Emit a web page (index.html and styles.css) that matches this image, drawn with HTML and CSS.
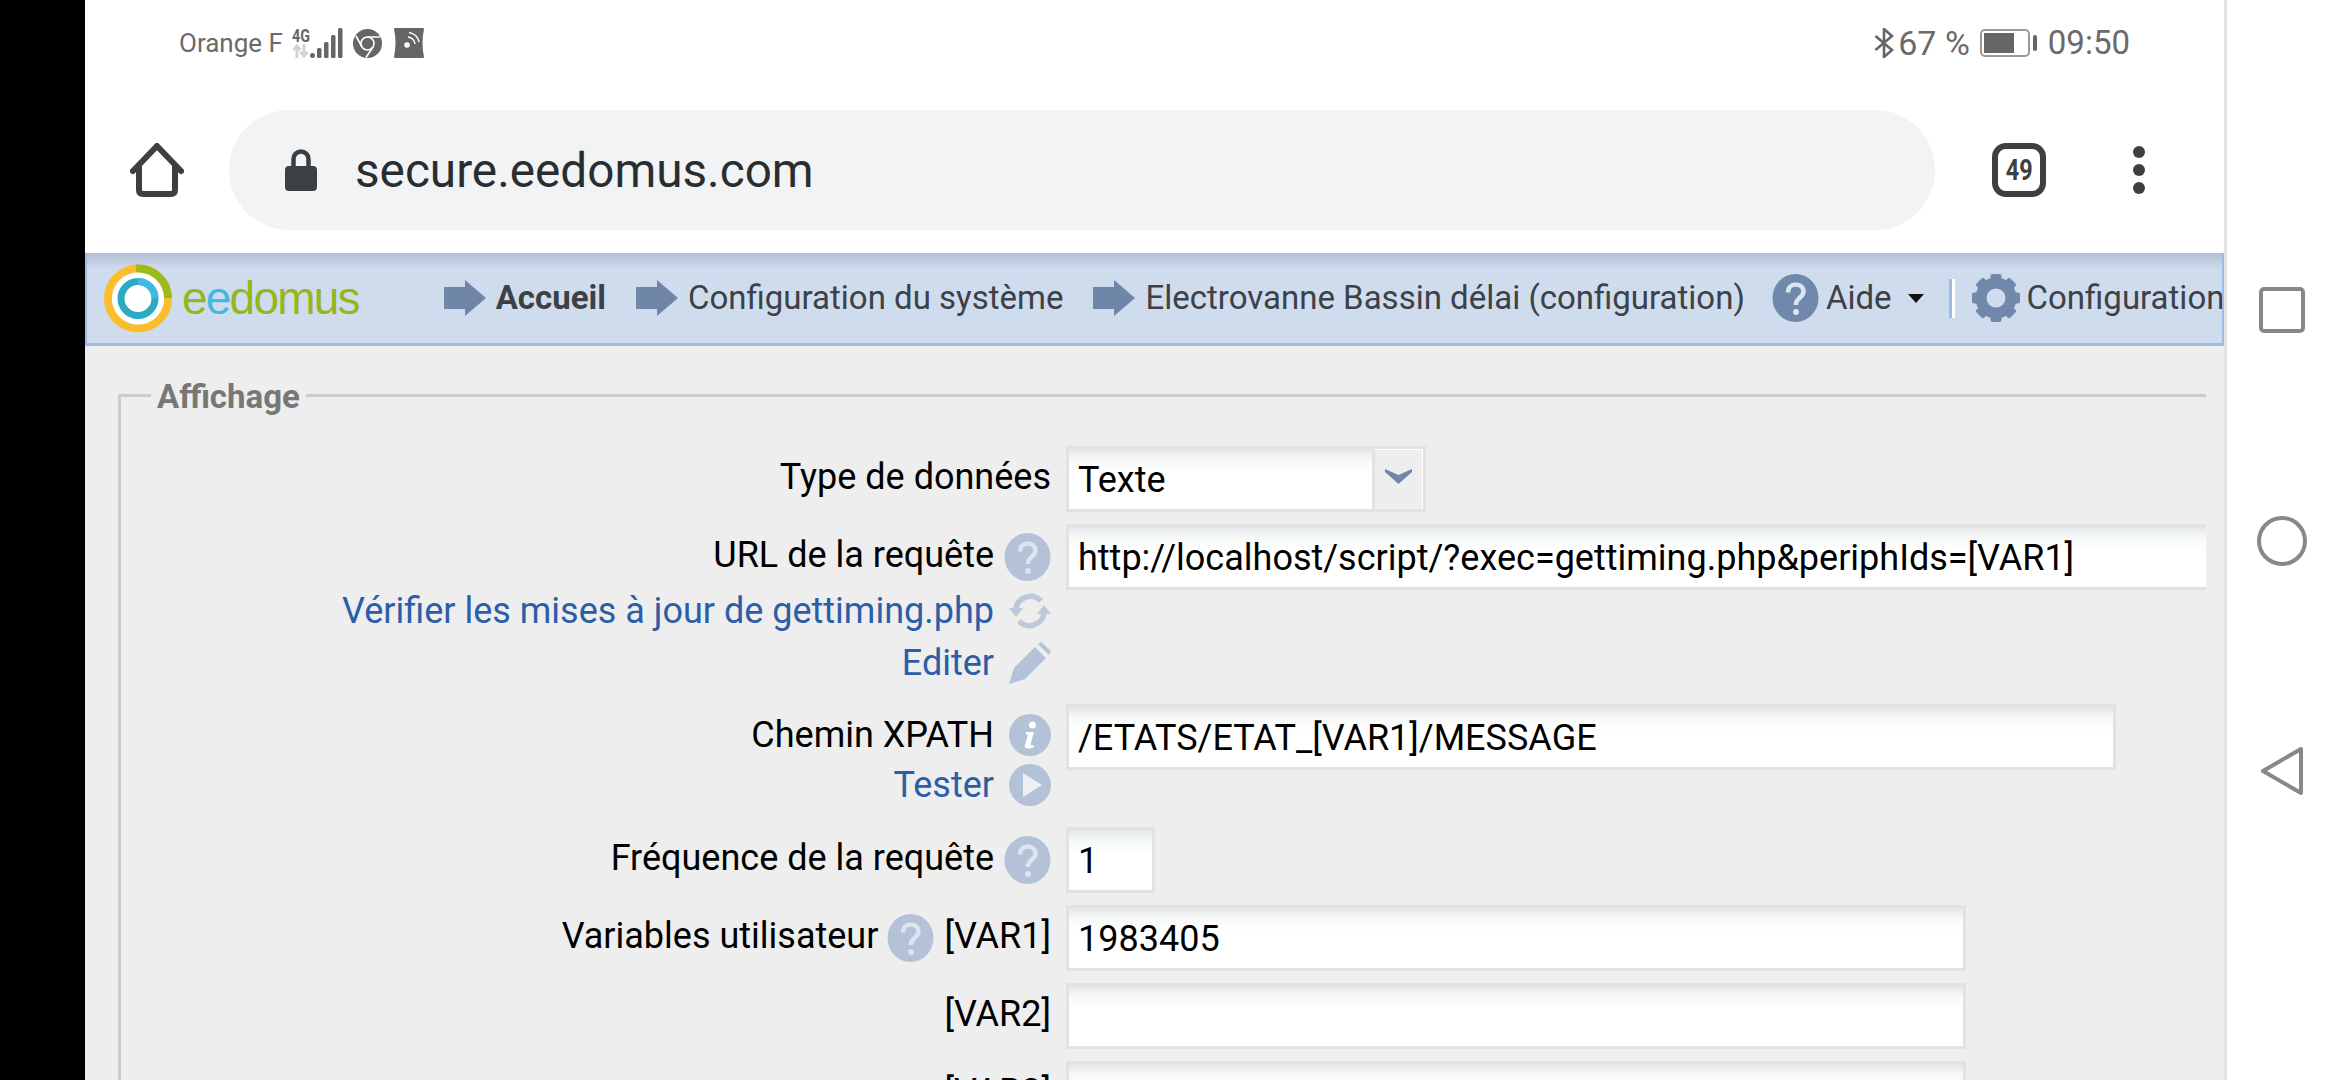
FILE: index.html
```html
<!DOCTYPE html>
<html lang="fr">
<head>
<meta charset="utf-8">
<title>eedomus</title>
<link rel="stylesheet" href="styles.css">
</head>
<body>
<svg class="defs" width="0" height="0" aria-hidden="true">
  <defs>
    <g id="arrow"><path d="M0 7H21V0L42 18L21 36V29H0Z"/></g>
    <g id="help">
      <ellipse cx="23.5" cy="24" rx="23" ry="24"/>
      <path class="glyph" d="M16 18.5c0-5 3.500-8 7.800-8 4.500 0 7.700 3 7.700 7 0 6-7.500 6.500-7.500 12.500v1" fill="none" stroke-width="4.500"/>
      <circle class="dot" cx="24" cy="38" r="2.900"/>
    </g>
  </defs>
</svg>
<div class="screen">
  <div class="bezel"></div>
  <div class="phone">
    <header class="statusbar">
      <div class="status-group">
        <span class="carrier">Orange F</span>
        <span class="net">
          <span class="net-type">4G</span>
          <svg class="net-arrows" width="18" height="14" viewBox="0 0 18 14"><path d="M5 14V2M1.500 6L5 2L8.500 6M12 0V12M8.500 8L12 12L15.500 8" fill="none" stroke="#d4d4d4" stroke-width="3"/></svg>
        </span>
        <svg class="signal" width="33" height="30" viewBox="0 0 33 30"><circle cx="2.500" cy="27.500" r="2.500"/><rect x="7" y="20" width="4.500" height="10" rx="1.500"/><rect x="14" y="14" width="4.500" height="16" rx="1.500"/><rect x="21" y="7" width="4.500" height="23" rx="1.500"/><rect x="28" y="0" width="4.500" height="30" rx="1.500"/></svg>
        <svg class="chrome" width="29" height="29" viewBox="0 0 29 29"><circle cx="14.500" cy="14.500" r="14.500" fill="#666"/><circle cx="14.500" cy="14.500" r="6.500" fill="none" stroke="#fff" stroke-width="1.600"/><path d="M14.500 8H27M9 18L3 7M20 18L13 28.500" fill="none" stroke="#fff" stroke-width="1.600"/></svg>
        <svg class="nfc" width="30" height="30" viewBox="0 0 30 30"><path d="M1 0H29Q30 0 30 1Q27 15 30 29Q30 30 29 30H1Q0 30 0 29Q3 15 0 1Q0 0 1 0Z" fill="#666"/><circle cx="13" cy="17" r="2.800" fill="#fff"/><path d="M14 9A8 8 0 0 1 21 16M15 4.500A12 12 0 0 1 25 14" fill="none" stroke="#fff" stroke-width="1.600"/></svg>
      </div>
      <div class="status-group">
        <svg class="bt" width="20" height="30" viewBox="0 0 20 30"><path d="M1.500 8L18 22L10 29V1L18 8L1.500 22" fill="none" stroke="#666" stroke-width="2.600"/></svg>
        <span class="status-text pct">67 %</span>
        <span class="battery"><span class="battery-body"><span class="battery-fill"></span></span><span class="battery-nub"></span></span>
        <span class="status-text clock">09:50</span>
      </div>
    </header>

    <div class="toolbar">
      <svg class="home" width="54" height="54" viewBox="0 0 54 54"><path d="M3 28L27 3L51 28M9 24V47Q9 51 13 51H41Q45 51 45 47V24" fill="none" stroke="#3c4043" stroke-width="6" stroke-linecap="round" stroke-linejoin="round"/></svg>
      <div class="address">
        <svg class="lock" width="32" height="42" viewBox="0 0 32 42"><path d="M8.500 20V10a7.500 7.500 0 0 1 15 0V20" fill="none" stroke="#3c4043" stroke-width="4.500"/><rect y="17" width="32" height="25" rx="4" fill="#3c4043"/></svg>
        <span class="url">secure.eedomus.com</span>
      </div>
      <div class="tabs"><span class="tabs-count">49</span></div>
      <div class="menu"><i></i><i></i><i></i></div>
    </div>

    <nav class="navbar">
      <svg class="logo" width="68" height="69" viewBox="0 0 68 69">
        <circle cx="34" cy="34.500" r="30" fill="none" stroke="#fbbd2b" stroke-width="8"/>
        <path d="M32 4.500A30 30 0 0 1 64 34" fill="none" stroke="#9dba1a" stroke-width="8"/>
        <circle cx="34" cy="34.500" r="26" fill="#fff"/>
        <circle cx="34" cy="34.500" r="17" fill="none" stroke="#2aabc3" stroke-width="7"/>
        <path d="M34 17.500A17 17 0 0 1 51 34.500" fill="none" stroke="#41b9e2" stroke-width="7"/>
      </svg>
      <span class="wordmark">e<span class="wordmark-blue">e</span>domus</span>
      <a class="crumb crumb-first"><svg class="nav-arrow" width="42" height="36"><use href="#arrow"/></svg><b class="crumb-text">Accueil</b></a>
      <a class="crumb"><svg class="nav-arrow" width="42" height="36"><use href="#arrow"/></svg><span class="crumb-text">Configuration du système</span></a>
      <a class="crumb"><svg class="nav-arrow" width="42" height="36"><use href="#arrow"/></svg><span class="crumb-text">Electrovanne Bassin délai (configuration)</span></a>
      <a class="crumb crumb-help"><svg class="nav-help" width="47" height="48"><use href="#help"/></svg><span class="crumb-text">Aide</span><span class="caret"></span></a>
      <span class="nav-sep"></span>
      <a class="crumb crumb-config">
        <svg class="gear" width="48" height="48" viewBox="-24 -24 48 48">
          <circle r="15" fill="none" stroke="#7089ab" stroke-width="11"/>
          <g fill="#7089ab"><rect x="-5.500" y="-24" width="11" height="48" rx="2"/><rect x="-5.500" y="-24" width="11" height="48" rx="2" transform="rotate(45)"/><rect x="-5.500" y="-24" width="11" height="48" rx="2" transform="rotate(90)"/><rect x="-5.500" y="-24" width="11" height="48" rx="2" transform="rotate(135)"/></g>
          <circle r="9.500" fill="#cfdcee"/>
        </svg>
        <span class="crumb-text">Configuration</span>
      </a>
    </nav>

    <main class="page">
      <fieldset class="panel">
        <legend class="panel-title">Affichage</legend>
        <div class="form">
          <div class="labels"><div class="line"><span>Type de données</span></div></div>
          <div class="select"><span class="select-value">Texte</span><span class="select-btn"><svg width="27" height="15" viewBox="0 0 27 15"><path d="M0 0L13.500 6L27 0V3L13.500 15L0 3Z" fill="#6f87a8"/></svg></span></div>

          <div class="labels labels-tall">
            <div class="line"><span>URL de la requête</span><span class="slot"><svg class="ico-help" width="47" height="48"><use href="#help"/></svg></span></div>
            <div class="line line-link"><a class="link">Vérifier les mises à jour de gettiming.php</a><span class="slot"><svg class="ico" width="42" height="36" viewBox="0 0 42 36"><path d="M7 16A14.500 14.500 0 0 1 32 8M35 20A14.500 14.500 0 0 1 10 28" fill="none" stroke="#bcc8d9" stroke-width="5.500"/><path d="M0 15H14L7 24ZM28 21H42L35 12Z" fill="#bcc8d9"/></svg></span></div>
            <div class="line line-link"><a class="link">Editer</a><span class="slot"><svg class="ico" width="42" height="42" viewBox="0 0 42 42"><path d="M0 42L5 26L26 5L37 16L16 37ZM29 2L32 0L42 9L40 13Z" fill="#b3c2d6"/></svg></span></div>
          </div>
          <div class="field field-url">http://localhost/script/?exec=gettiming.php&amp;periphIds=[VAR1]</div>

          <div class="labels labels-tall">
            <div class="line"><span>Chemin XPATH</span><span class="slot"><svg class="ico" width="42" height="42" viewBox="0 0 42 42"><circle cx="21" cy="21" r="21" fill="#b3c2d6"/><circle cx="23.500" cy="11" r="3.500" fill="#fff"/><path d="M17 18H25L21.500 30Q21 32 24 31L25 33Q21 35 18 34.500Q15 34 16 31L19 21L17 20.500Z" fill="#fff"/></svg></span></div>
            <div class="line line-link line-test"><a class="link">Tester</a><span class="slot"><svg class="ico" width="42" height="42" viewBox="0 0 42 42"><circle cx="21" cy="21" r="21" fill="#b3c2d6"/><path d="M14 9L33 21L14 33Z" fill="#eef0f3"/></svg></span></div>
          </div>
          <div class="field field-xpath">/ETATS/ETAT_[VAR1]/MESSAGE</div>

          <div class="labels"><div class="line"><span>Fréquence de la requête</span><span class="slot"><svg class="ico-help" width="47" height="48"><use href="#help"/></svg></span></div></div>
          <div class="field field-short">1</div>

          <div class="labels"><div class="line"><span>Variables utilisateur</span><svg class="ico-help ico-inline" width="47" height="48"><use href="#help"/></svg><span>[VAR1]</span></div></div>
          <div class="field field-var">1983405</div>

          <div class="labels"><div class="line"><span>[VAR2]</span></div></div>
          <div class="field field-var"></div>

          <div class="labels"><div class="line"><span>[VAR3]</span></div></div>
          <div class="field field-var"></div>
        </div>
      </fieldset>
    </main>
  </div>
  <aside class="softkeys">
    <svg class="key key-square" width="46" height="46" viewBox="0 0 46 46"><rect x="2" y="2" width="42" height="42" rx="3" fill="none" stroke="#888" stroke-width="4"/></svg>
    <svg class="key key-circle" width="50" height="50" viewBox="0 0 50 50"><circle cx="25" cy="25" r="23" fill="none" stroke="#888" stroke-width="4"/></svg>
    <svg class="key key-back" width="44" height="50" viewBox="0 0 44 50"><path d="M3 25L41 3V47Z" fill="none" stroke="#888" stroke-width="4" stroke-linejoin="round"/></svg>
  </aside>
</div>
</body>
</html>
```
FILE: styles.css
```css
* { box-sizing: border-box; }
html, body { margin: 0; padding: 0; height: 100%; overflow: hidden; background: #fff; }
body { font-family: Roboto, "Liberation Sans", sans-serif; }
.defs { display: block; height: 0; }
.screen { display: flex; width: 2340px; height: 1080px; overflow: hidden; }
.bezel { width: 85px; background: #000; flex: none; }
.phone { width: 2139px; flex: none; display: flex; flex-direction: column; background: #fff; overflow: hidden; }

/* Status bar */
.statusbar { height: 86px; flex: none; display: flex; justify-content: space-between; align-items: center; padding: 0 94px; color: #666; }
.status-group { display: flex; align-items: center; }
.carrier { font-size: 26px; line-height: 30px; color: #6a6a6a; }
.net { display: flex; flex-direction: column; align-items: flex-start; width: 18px; margin-left: 9px; }
.net-type { font-size: 18px; font-weight: 700; line-height: 15px; color: #666; transform: scaleX(.8); transform-origin: left center; }
.net-arrows { margin-top: 1px; }
.signal { fill: #666; margin-left: 0; }
.chrome { margin-left: 10px; }
.nfc { margin-left: 12px; }
.bt { margin-right: 4px; }
.status-text { font-size: 33px; line-height: 36px; color: #6a6a6a; }
.pct { font-size: 34px; }
.battery { display: flex; align-items: center; margin: 0 11px 0 10px; }
.battery-body { display: block; width: 50px; height: 28px; border: 2px solid #999; border-radius: 5px; padding: 2px; }
.battery-fill { display: block; width: 30px; height: 100%; background: #666; }
.battery-nub { display: block; width: 4px; height: 16px; background: #666; border-radius: 2px; margin-left: 3px; }

/* Toolbar */
.toolbar { height: 167px; flex: none; display: flex; align-items: center; padding-left: 45px; }
.home { flex: none; }
.address { width: 1706px; height: 120px; margin-left: 45px; flex: none; background: #f1f3f4; border-radius: 60px; display: flex; align-items: center; padding-left: 56px; }
.url { font-size: 47.700px; color: #2a2d30; margin-left: 38px; line-height: 62px; padding-top: 2px; }
.tabs { width: 54px; height: 54px; margin-left: 57px; flex: none; border: 6px solid #3c4043; border-radius: 14px; display: flex; align-items: center; justify-content: center; }
.tabs-count { font-size: 30px; font-weight: 700; color: #3c4043; transform: scaleX(.78); line-height: 30px; }
.menu { margin-left: 87px; display: flex; flex-direction: column; gap: 6px; flex: none; }
.menu i { display: block; width: 12px; height: 12px; border-radius: 50%; background: #3c4043; }

/* Navigation bar */
.navbar { height: 93px; flex: none; display: flex; align-items: center; overflow: hidden; white-space: nowrap; background: linear-gradient(#b3c0d3, #cfdcee 16px); border-left: 2px solid #9fbbe3; border-right: 2px solid #9fbbe3; border-bottom: 3px solid #9fbbe3; color: #3d4146; padding-left: 17px; }
.logo { flex: none; }
.wordmark { font-family: "Liberation Sans", sans-serif; font-size: 46px; letter-spacing: -1.800px; color: #96b61c; margin-left: 10px; }
.wordmark-blue { color: #41b9e2; }
.crumb { display: flex; align-items: center; margin-left: 30px; flex: none; }
.crumb-first { margin-left: 85px; }
.crumb-help { margin-left: 27px; }
.crumb-config { margin-left: 17px; }
.nav-arrow { fill: #6f86a8; margin-right: 10px; flex: none; }
.nav-help { fill: #7089ab; margin-right: 7px; flex: none; }
.glyph { stroke: #dbe4f0; }
.dot { fill: #dbe4f0; }
.crumb-text { font-size: 33px; line-height: 44px; }
.caret { width: 0; height: 0; border-left: 8px solid transparent; border-right: 8px solid transparent; border-top: 9px solid #111; margin-left: 16px; }
.nav-sep { width: 6px; height: 39px; margin-left: 25px; flex: none; background: linear-gradient(to right, #9fbbe3 50%, #fff 50%); }
.gear { margin-right: 7px; flex: none; }

/* Page */
.page { flex: 1; background: #eee; padding: 25px 18px 0 33px; overflow: hidden; }
.panel { margin: 0; padding: 27px 0 0; border: 0; border-top: 3px solid #ccc; border-left: 3px solid #ccc; min-width: 0; }
.panel-title { margin-left: 30px; padding: 4px 6px 0; font-size: 33px; font-weight: 700; line-height: 44px; color: #777; }
.form { display: grid; grid-template-columns: 930px 1fr; column-gap: 15px; row-gap: 12px; color: #000; }
.labels { font-size: 36px; }
.labels-tall { padding-bottom: 4px; }
.line { display: flex; justify-content: flex-end; align-items: center; height: 60px; padding-top: 2px; line-height: 56px; white-space: nowrap; }
.line-link { height: 52px; line-height: 48px; }
.line-test { margin-top: -6px; margin-bottom: 1px; }
.link { color: #2b5ea7; }
.slot { width: 47px; margin-left: 10px; display: flex; justify-content: flex-end; flex: none; }
.ico-help { fill: #b3c2d6; flex: none; margin-top: 4px; }
.ico-help .glyph { stroke: #dfe5ee; }
.ico-inline { margin: 4px 10px 0 9px; }
.ico { display: block; flex: none; }
.field, .select { height: 66px; font-size: 36px; line-height: 62px; color: #000; background: linear-gradient(#e3e6e8, #f6f8f8 10px, #fff 24px); border: 3px solid #e2e2e2; padding: 0 9px; white-space: nowrap; overflow: hidden; }
.field-url { width: 100%; border-right: 0; }
.field-xpath { width: 1050px; }
.field-short { width: 89px; }
.field-var { width: 900px; }
.select { width: 360px; display: flex; padding: 0 0 0 9px; }
.select-value { flex: 1; }
.select-btn { width: 51px; height: 100%; flex: none; display: flex; align-items: center; justify-content: center; background: #eee; border-left: 3px solid #e2e2e2; border-top: 1px solid #fff; border-right: 1px solid #fff; padding-bottom: 6px; }

/* Soft keys */
.softkeys { width: 116px; flex: none; border-left: 3px solid #e2e2e2; background: #fff; display: flex; flex-direction: column; align-items: center; padding: 287px 3px 0 0; }
.key { display: block; flex: none; }
.key-circle { margin-top: 183px; }
.key-back { margin-top: 180px; }
```
